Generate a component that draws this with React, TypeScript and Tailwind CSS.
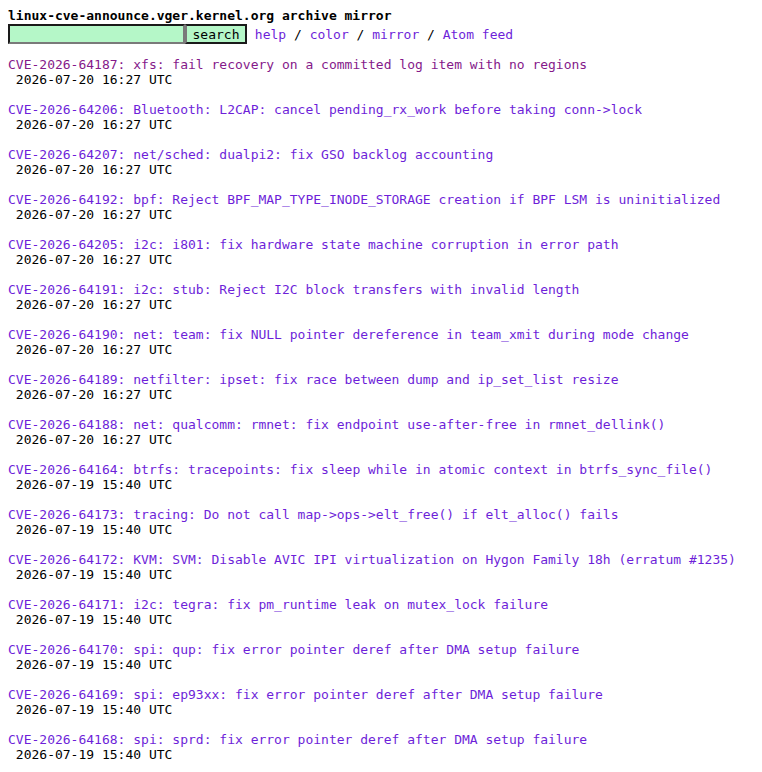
const entries: { id: string; title: string; date: string; visited?: boolean }[] = [
  { id: "CVE-2026-64187", title: "xfs: fail recovery on a committed log item with no regions", date: "2026-07-20 16:27 UTC", visited: true },
  { id: "CVE-2026-64206", title: "Bluetooth: L2CAP: cancel pending_rx_work before taking conn->lock", date: "2026-07-20 16:27 UTC" },
  { id: "CVE-2026-64207", title: "net/sched: dualpi2: fix GSO backlog accounting", date: "2026-07-20 16:27 UTC" },
  { id: "CVE-2026-64192", title: "bpf: Reject BPF_MAP_TYPE_INODE_STORAGE creation if BPF LSM is uninitialized", date: "2026-07-20 16:27 UTC" },
  { id: "CVE-2026-64205", title: "i2c: i801: fix hardware state machine corruption in error path", date: "2026-07-20 16:27 UTC" },
  { id: "CVE-2026-64191", title: "i2c: stub: Reject I2C block transfers with invalid length", date: "2026-07-20 16:27 UTC" },
  { id: "CVE-2026-64190", title: "net: team: fix NULL pointer dereference in team_xmit during mode change", date: "2026-07-20 16:27 UTC" },
  { id: "CVE-2026-64189", title: "netfilter: ipset: fix race between dump and ip_set_list resize", date: "2026-07-20 16:27 UTC" },
  { id: "CVE-2026-64188", title: "net: qualcomm: rmnet: fix endpoint use-after-free in rmnet_dellink()", date: "2026-07-20 16:27 UTC" },
  { id: "CVE-2026-64164", title: "btrfs: tracepoints: fix sleep while in atomic context in btrfs_sync_file()", date: "2026-07-19 15:40 UTC" },
  { id: "CVE-2026-64173", title: "tracing: Do not call map->ops->elt_free() if elt_alloc() fails", date: "2026-07-19 15:40 UTC" },
  { id: "CVE-2026-64172", title: "KVM: SVM: Disable AVIC IPI virtualization on Hygon Family 18h (erratum #1235)", date: "2026-07-19 15:40 UTC" },
  { id: "CVE-2026-64171", title: "i2c: tegra: fix pm_runtime leak on mutex_lock failure", date: "2026-07-19 15:40 UTC" },
  { id: "CVE-2026-64170", title: "spi: qup: fix error pointer deref after DMA setup failure", date: "2026-07-19 15:40 UTC" },
  { id: "CVE-2026-64169", title: "spi: ep93xx: fix error pointer deref after DMA setup failure", date: "2026-07-19 15:40 UTC" },
  { id: "CVE-2026-64168", title: "spi: sprd: fix error pointer deref after DMA setup failure", date: "2026-07-19 15:40 UTC" },
];

// archive index page, public-inbox style
export default function App() {
  return (
    <div className="min-h-screen bg-white p-2 font-['DejaVu_Sans_Mono',monospace] text-[13px] leading-[15px] text-black">
      <div className="whitespace-pre font-bold">linux-cve-announce.vger.kernel.org archive mirror</div>
      <div className="flex h-[22px] items-center whitespace-pre">
        <input
          type="text"
          className="box-border h-[20px] w-[177px] border-2 border-t-[#1a1a1a] border-l-[#1a1a1a] border-b-[#7a7a7a] border-r-[#7a7a7a] bg-[#b5f7c8] outline-none"
        />
        <button className="box-border h-[20px] w-[62px] border-2 border-t-[#1a1a1a] border-r-[#1a1a1a] border-b-[#1a1a1a] border-l-[#7a7a7a] bg-[#b5f7c8] text-[13px] leading-[15px] text-black">
          search
        </button>
        <span> </span>
        <a className="text-[#6e1fd9]">help</a>
        <span> / </span>
        <a className="text-[#6e1fd9]">color</a>
        <span> / </span>
        <a className="text-[#6e1fd9]">mirror</a>
        <span> / </span>
        <a className="text-[#6e1fd9]">Atom feed</a>
      </div>
      <div className="mt-[12px] flex flex-col gap-[15px] whitespace-pre">
        {entries.map((e) => (
          <div key={e.id}>
            <a className={e.visited ? "text-[#85198a]" : "text-[#6e1fd9]"}>
              {e.id}: {e.title}
            </a>
            <div> {e.date}</div>
          </div>
        ))}
      </div>
    </div>
  );
}
